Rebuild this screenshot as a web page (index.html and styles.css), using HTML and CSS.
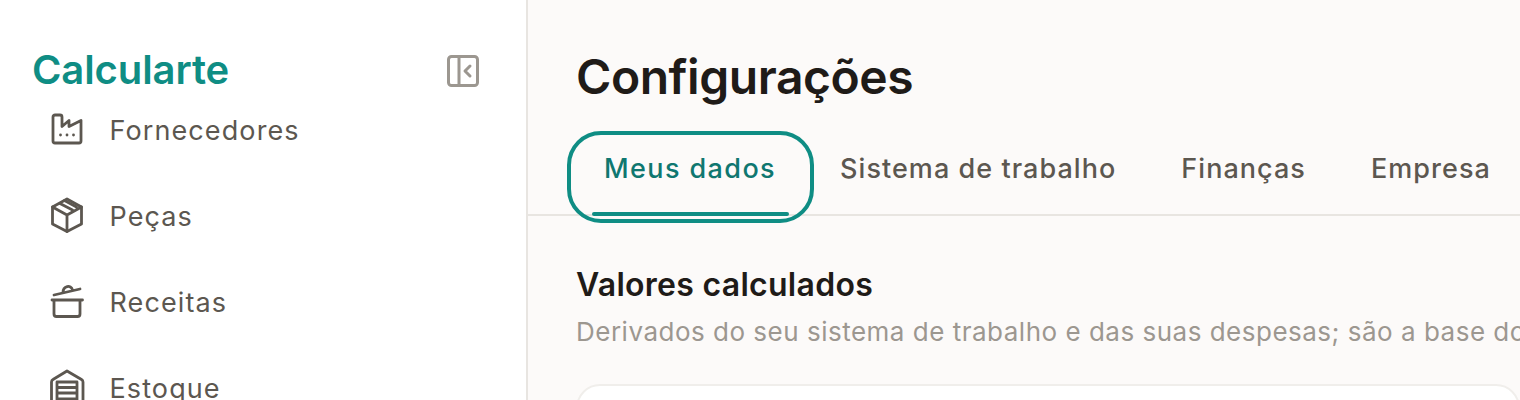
FILE: index.html
```html
<!DOCTYPE html>
<html lang="pt-BR">
<head>
<meta charset="utf-8">
<title>Configurações</title>
<link rel="stylesheet" href="styles.css">
</head>
<body>
<div class="app">
  <aside class="sidebar">
    <header class="brand-row">
      <span class="brand">Calcularte</span>
      <button class="collapse" aria-label="Recolher">
        <svg viewBox="0 0 32 32" width="32" height="32" fill="none" stroke="#9c9790" stroke-width="3" stroke-linecap="round" stroke-linejoin="round"><rect x="1.5" y="1.500" width="29" height="29" rx="3"/><path d="M12 2v28"/><path d="M23 11l-5 5 5 5"/></svg>
      </button>
    </header>
    <nav class="nav">
      <a class="nav-item"><svg class="nav-icon" viewBox="0 0 32 32" fill="none"><path d="M2 3a2 2 0 0 1 2-2h5a2 2 0 0 1 2 2v9.500l7-6v6l12-6V27a2 2 0 0 1-2 2H4a2 2 0 0 1-2-2z"/><path d="M9.500 21h.01M16 21h.01M22.500 21h.01"/></svg>Fornecedores</a>
      <a class="nav-item"><svg class="nav-icon" viewBox="0 0 32 32" fill="none"><path d="M16 -1 30.500 7v17L16 31.500 1.500 24V7z"/><path d="M1.500 7 16 15l14.500-8M16 15v16.500M9 3.500l12.500 6.500M13.500 0.500l12 6.500"/></svg>Peças</a>
      <a class="nav-item"><svg class="nav-icon" viewBox="0 0 32 32" fill="none"><path d="M1 14h30.500M3 14v14a2.500 2.500 0 0 0 2.500 2.500h21a2.500 2.500 0 0 0 2.500-2.500V14"/><path d="M3 9 29 3M12 6.500C12 0 20-2 21.500 4"/></svg>Receitas</a>
      <a class="nav-item"><svg class="nav-icon" viewBox="0 0 32 32" fill="none"><path d="M0.500 34V10a3 3 0 0 1 1.500-2.500L16-1 30.500 7.500a3 3 0 0 1 1.500 2.500v24"/><path d="M6 34V10h20v24M6 15.500h20M6 21h20M6 27h20"/></svg>Estoque</a>
    </nav>
  </aside>
  <main class="main">
    <h1 class="title">Configurações</h1>
    <div class="tabs">
      <button class="tab active">Meus dados</button>
      <button class="tab">Sistema de trabalho</button>
      <button class="tab">Finanças</button>
      <button class="tab">Empresa</button>
    </div>
    <section class="section">
      <h2 class="section-title">Valores calculados</h2>
      <p class="section-sub">Derivados do seu sistema de trabalho e das suas despesas; são a base dos seus cálculos de preço e de custo em todas as receitas.</p>
      <div class="card"></div>
    </section>
  </main>
</div>
</body>
</html>
```
FILE: styles.css
```css
* { box-sizing: border-box; }
html, body { margin: 0; height: 400px; overflow: hidden; }
body { font-family: Inter, "Liberation Sans", sans-serif; background: #fcfaf9; }
.app { display: flex; height: 400px; overflow: hidden; }
.sidebar { width: 528px; flex: none; background: #fff; border-right: 2px solid #e8e5e1; overflow: hidden; }
.brand-row { height: 87px; padding: 44px 47px 0 32px; display: flex; justify-content: space-between; align-items: flex-start; }
.brand { font-size: 40px; line-height: 52px; font-weight: 600; color: #0f8d84; letter-spacing: -0.1px; }
.collapse { border: 0; background: none; padding: 0; margin-top: 11px; width: 32px; height: 32px; }
.collapse svg { display: block; }
.nav { display: flex; flex-direction: column; }
.nav-item { height: 86px; flex: none; display: flex; align-items: center; gap: 26.5px; padding-left: 51px; font-size: 27px; letter-spacing: 1.1px; color: #5c5750; }
.nav-icon { width: 32px; height: 32px; flex: none; overflow: visible; stroke: #5c5750; stroke-width: 2.8; stroke-linecap: round; stroke-linejoin: round; }
.main { flex: 1; min-width: 0; }
.title { margin: 0; padding: 48px 0 0 48px; font-size: 48px; line-height: 58px; font-weight: 600; letter-spacing: -0.45px; color: #1f1b18; height: 139px; }
.tabs { display: flex; gap: 5px; height: 77px; padding: 0 0 0 47px; border-bottom: 2px solid #e8e5e1; }
.tab { position: relative; height: 76px; padding: 0 30px 17px; border: 0; background: none; font: 500 27px Inter, sans-serif; letter-spacing: 1.05px; color: #5c5750; border-radius: 26px; white-space: nowrap; }
.tab.active { padding: 0 30px 17px 29px; margin-right: -1px; letter-spacing: 1.4px; color: #0f7770; outline: 4px solid #0f8d84; outline-offset: 4px; }
.tab.active::after { content: ""; position: absolute; left: 17px; right: 17px; bottom: -1px; height: 4px; border-radius: 2px; background: #0f8d84; }
.section { padding: 48px 0 0 48px; }
.section-title { margin: 0; font-size: 32px; line-height: 42px; font-weight: 600; letter-spacing: 0.28px; color: #1f1b18; white-space: nowrap; }
.section-sub { margin: 8px 0 0; font-size: 26px; line-height: 36px; letter-spacing: 0.5px; color: #9c9790; white-space: nowrap; }
.card { margin-top: 34px; height: 120px; background: #fff; border: 2px solid #f0eeeb; border-radius: 24px; }
```
